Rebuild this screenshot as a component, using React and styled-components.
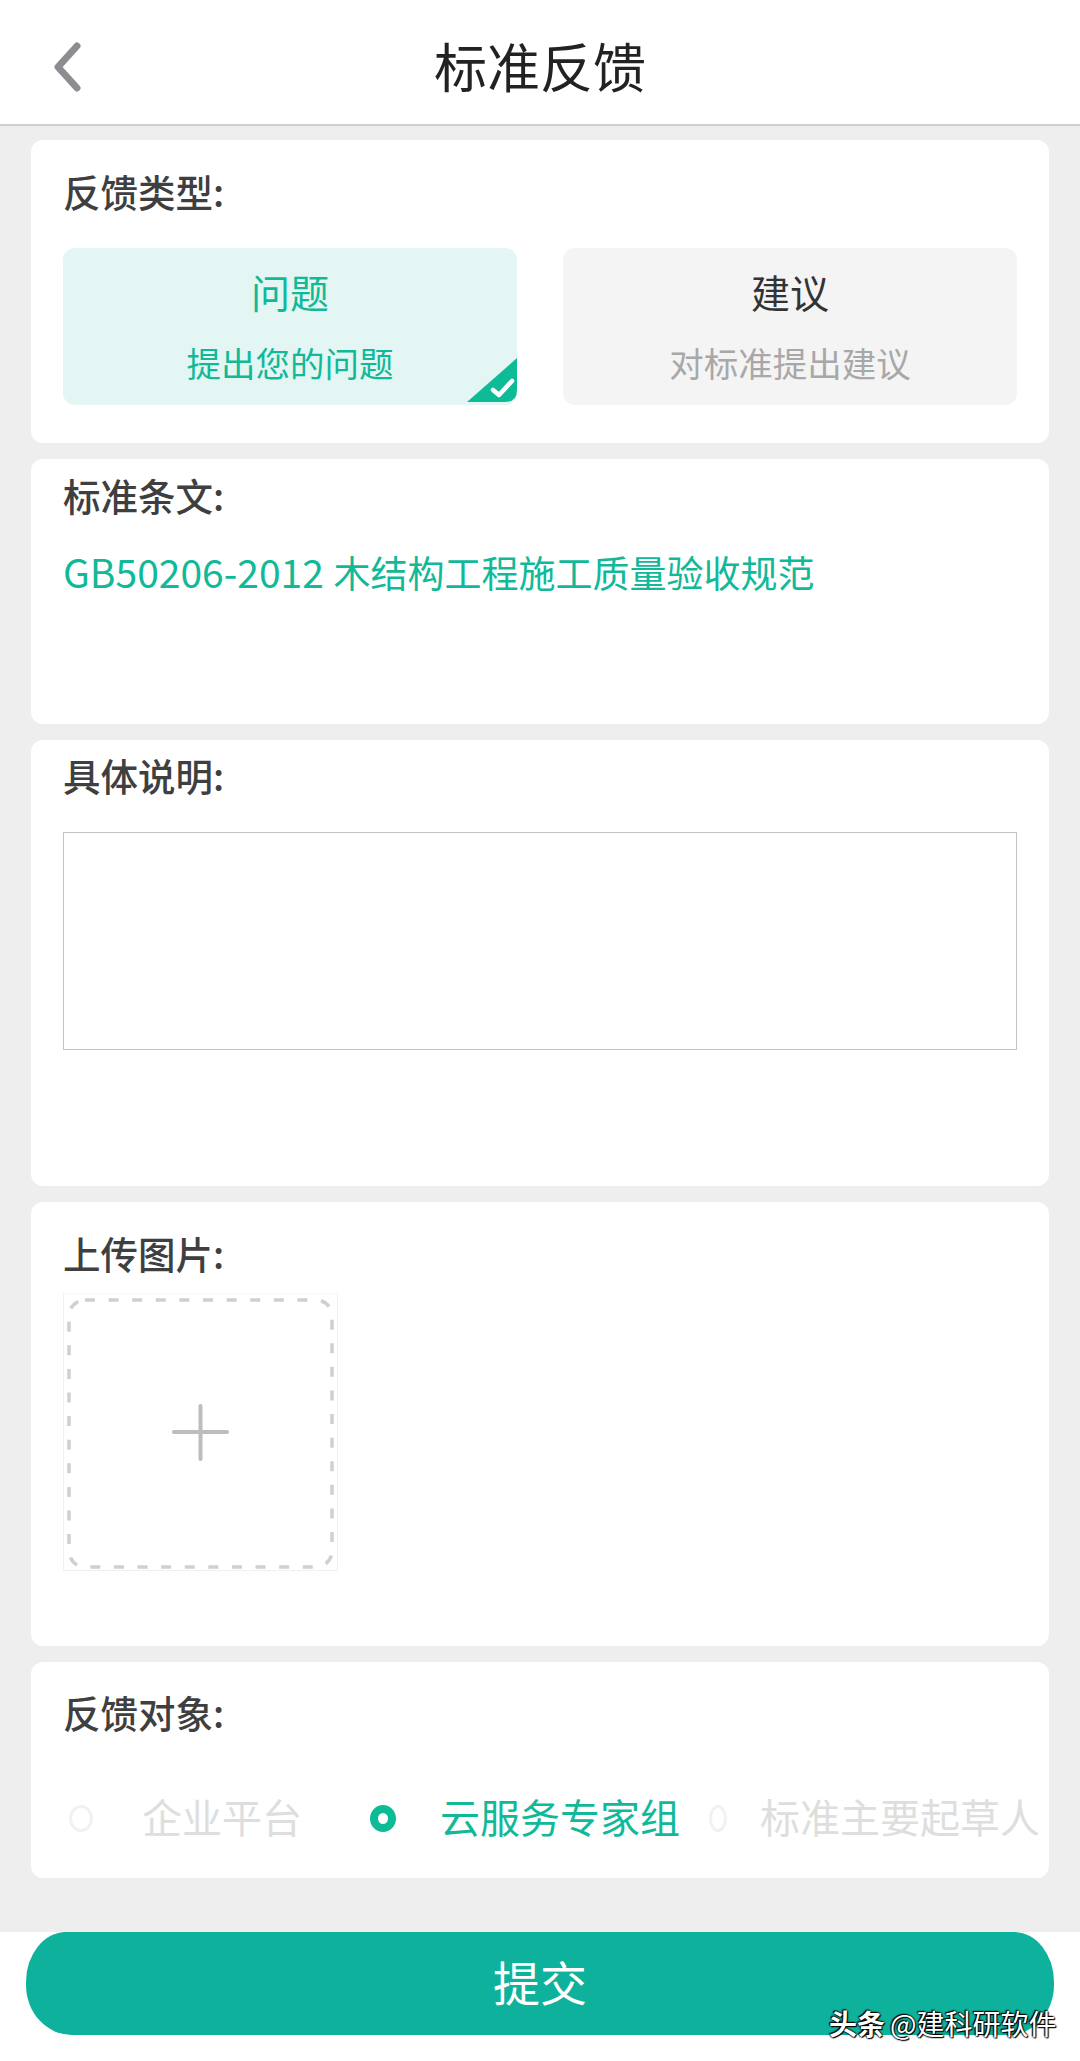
import React from "react";
import styled, { createGlobalStyle } from "styled-components";

const Global = createGlobalStyle`
  html, body { margin: 0; padding: 0; background: #eee; }
  body { font-family: "Noto Sans CJK SC", "Noto Sans", sans-serif; }
  * { box-sizing: border-box; }
`;

const Page = styled.div`
  position: relative;
  width: 1080px;
  height: 2061px;
  display: flex;
  flex-direction: column;
  background: #eee;
  overflow: hidden;
`;

const Header = styled.header`
  height: 126px;
  flex: none;
  background: #fff;
  border-bottom: 2px solid #cfcfcf;
  display: grid;
  grid-template-columns: 52px 29px 1fr 81px;
  align-items: center;
`;

const BackIcon = styled.svg`
  grid-column: 2;
  display: block;
  width: 29px;
  height: 50px;
  margin-top: 4px;
`;

const Title = styled.h1`
  grid-column: 3;
  margin: 0;
  font-size: 53px;
  line-height: 130px;
  font-weight: 400;
  color: #222;
  text-align: center;
`;

const Content = styled.main`
  flex: 1;
  padding: 14px 31px 0;
  display: flex;
  flex-direction: column;
  gap: 16px;
`;

const Card = styled.section`
  height: ${(p) => p.$h}px;
  padding: ${(p) => p.$top}px 32px 0;
  background: #fff;
  border-radius: 12px;
`;

const Label = styled.div`
  height: 50px;
  font-size: 37.500px;
  line-height: 44px;
  font-weight: 500;
  color: #3f3f3f;
`;

const Options = styled.div`
  margin-top: 29px;
  display: grid;
  grid-template-columns: 454px 454px;
  justify-content: space-between;
`;

const Option = styled.div`
  position: relative;
  height: 157px;
  padding-top: 18px;
  border-radius: 12px;
  text-align: center;
  background: ${(p) => (p.$active ? "#e3f6f3" : "#f4f4f4")};
`;

const OptionTitle = styled.div`
  font-size: 39px;
  line-height: 50px;
  color: ${(p) => (p.$active ? "#12b998" : "#333")};
`;

const OptionSub = styled.div`
  margin-top: 24px;
  font-size: 34.500px;
  line-height: 44px;
  color: ${(p) => (p.$active ? "#12b998" : "#a8a8a8")};
`;

const Corner = styled.svg`
  position: absolute;
  right: 0;
  bottom: 3px;
  width: 50px;
  height: 44px;
  display: block;
`;

const StandardText = styled.div`
  margin-top: 26px;
  height: 50px;
  font-size: 37px;
  line-height: 44px;
  color: #12b998;
  white-space: nowrap;
`;

const StandardCode = styled.span`
  font-size: 39px;
  margin-right: 1px;
`;

const TextBox = styled.div`
  margin-top: 29px;
  height: 218px;
  border: 1px solid #c4c4c4;
  background: #fff;
`;

const UploadBox = styled.div`
  margin-top: 12px;
  width: 275px;
  height: 278px;
  border: 1px solid #f0f0f0;
  border-top-color: #fafafa;
`;

const UploadArt = styled.svg`
  display: block;
  width: 273px;
  height: 276px;
`;

const RadioRow = styled.div`
  margin: 53px -32px 0 -32px;
  padding-left: 38px;
  display: flex;
  height: 50px;
  align-items: center;
`;

const RadioItem = styled.div`
  flex: none;
  width: ${(p) => p.$w}px;
  display: flex;
  align-items: center;
  gap: ${(p) => p.$gap}px;
`;

const RadioDot = styled.span`
  flex: none;
  display: block;
  width: ${(p) => p.$d}px;
  height: 27px;
  border-radius: 50%;
  border: ${(p) => (p.$on ? "8px solid #0dbb97" : "3px solid #f1f1f1")};
  background: #fff;
`;

const RadioText = styled.span`
  font-size: 40px;
  height: 50px;
  line-height: 46px;
  white-space: nowrap;
  color: ${(p) => (p.$on ? "#12b998" : "#dedede")};
`;

const Footer = styled.footer`
  position: relative;
  height: 129px;
  flex: none;
  background: #fff;
`;

const SubmitButton = styled.button`
  display: block;
  width: 1028px;
  height: 103px;
  margin: 0 26px;
  padding: 0 0 5px;
  border: 0;
  border-radius: 40px 40px 46px 46px / 50px;
  background: #0eb29c;
  color: #fff;
  font-family: inherit;
  font-size: 47px;
  line-height: 98px;
`;

const Watermark = styled.div`
  position: absolute;
  left: 829px;
  top: 72px;
  font-size: 28px;
  line-height: 38px;
  color: #fff;
  white-space: nowrap;
  text-shadow: 0 0 2px #000, 0 0 2px #000, 1px 1px 1px #000, -1px -1px 1px #000;
`;

const WatermarkBrand = styled.b`
  font-weight: 700;
  margin-right: 5px;
`;

export default function App() {
  return (
    <Page>
      <Global />
      <Header>
        <BackIcon viewBox="0 0 29 50" aria-hidden="true">
          <path d="M25 4 L6 25 L25 46" fill="none" stroke="#8c8c91" strokeWidth="7" strokeLinecap="round" strokeLinejoin="round" />
        </BackIcon>
        <Title>标准反馈</Title>
      </Header>
      <Content>
        <Card $h={303} $top={29}>
          <Label>反馈类型:</Label>
          <Options>
            <Option $active>
              <OptionTitle $active>问题</OptionTitle>
              <OptionSub $active>提出您的问题</OptionSub>
              <Corner viewBox="0 0 50 44" aria-hidden="true">
                <path d="M0 44 L50 0 V32 Q50 44 38 44 Z" fill="#0dbb97" />
                <path d="M26 32 L32 37 L45 23" fill="none" stroke="#fff" strokeWidth="4.500" strokeLinecap="round" strokeLinejoin="round" />
              </Corner>
            </Option>
            <Option>
              <OptionTitle>建议</OptionTitle>
              <OptionSub>对标准提出建议</OptionSub>
            </Option>
          </Options>
        </Card>
        <Card $h={265} $top={14}>
          <Label>标准条文:</Label>
          <StandardText><StandardCode>GB50206-2012 </StandardCode>木结构工程施工质量验收规范</StandardText>
        </Card>
        <Card $h={446} $top={13}>
          <Label>具体说明:</Label>
          <TextBox />
        </Card>
        <Card $h={444} $top={29}>
          <Label>上传图片:</Label>
          <UploadBox>
            <UploadArt viewBox="0 0 273 276" aria-hidden="true">
              <rect x="5" y="6" width="263" height="267" rx="16" fill="none" stroke="#d0d0d0" strokeWidth="3.500" strokeDasharray="10 13.600" />
              <path d="M110 138 H163 M136.500 112 V165" fill="none" stroke="#bdbdbd" strokeWidth="4" strokeLinecap="round" />
            </UploadArt>
          </UploadBox>
        </Card>
        <Card $h={216} $top={28}>
          <Label>反馈对象:</Label>
          <RadioRow>
            <RadioItem $w={301} $gap={49}>
              <RadioDot $d={24} />
              <RadioText>企业平台</RadioText>
            </RadioItem>
            <RadioItem $w={339} $gap={44}>
              <RadioDot $d={26} $on />
              <RadioText $on>云服务专家组</RadioText>
            </RadioItem>
            <RadioItem $w={330} $gap={33}>
              <RadioDot $d={18} />
              <RadioText>标准主要起草人</RadioText>
            </RadioItem>
          </RadioRow>
        </Card>
      </Content>
      <Footer>
        <SubmitButton type="button">提交</SubmitButton>
        <Watermark><WatermarkBrand>头条</WatermarkBrand>@建科研软件</Watermark>
      </Footer>
    </Page>
  );
}
